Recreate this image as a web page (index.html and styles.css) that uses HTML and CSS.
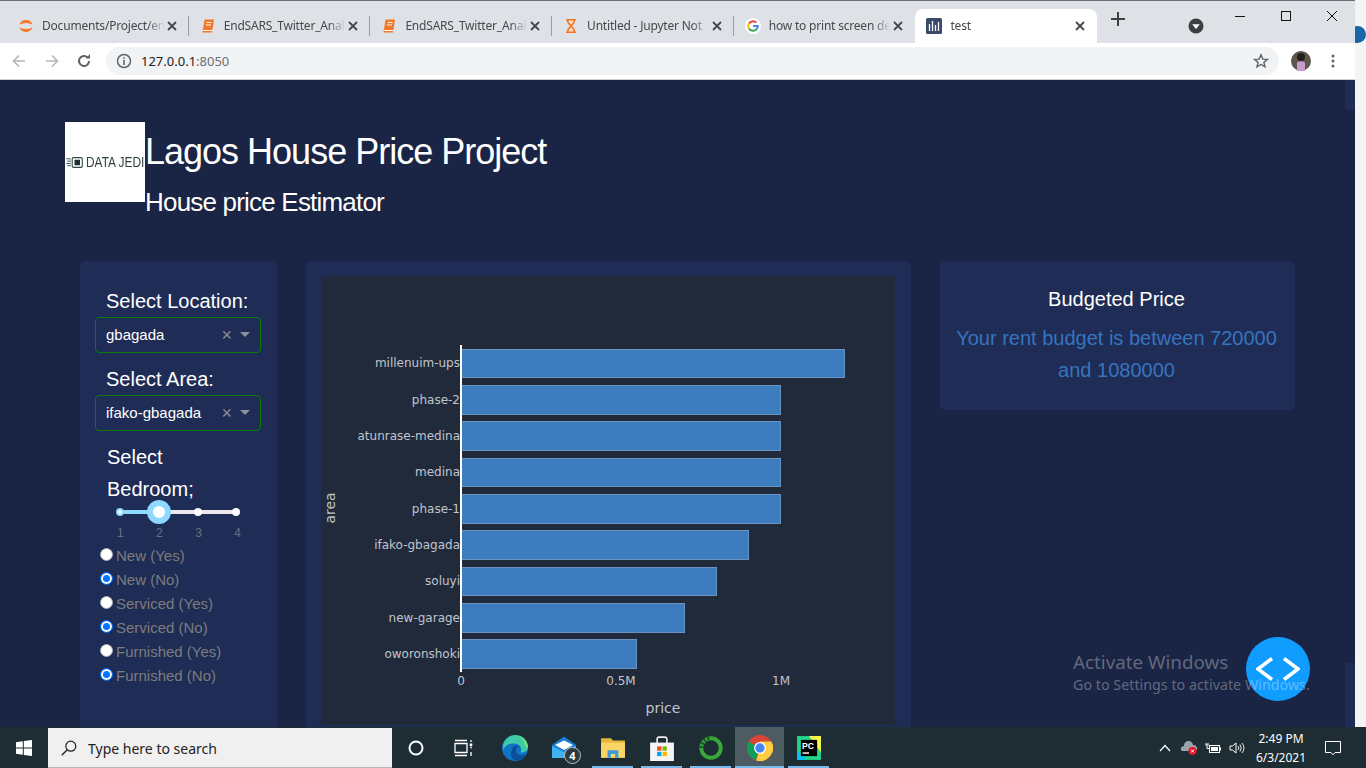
FILE: index.html
```html
<!DOCTYPE html>
<html lang="en">
<head>
<meta charset="utf-8">
<title>test</title>
<link rel="stylesheet" href="styles.css">
</head>
<body>
<div class="screen">
  <div class="upper">
    <div class="window">
      <div class="tabstrip">
        <div class="tab sep">
          <svg class="fav" viewBox="0 0 16 16"><path d="M1.500 6.500A7 7 0 0 1 14.500 6.500A10 5.500 0 0 0 1.500 6.500Z" fill="#f37726"/><path d="M1.500 9.500A7 7 0 0 0 14.500 9.500A10 5.500 0 0 1 1.500 9.500Z" fill="#f37726"/></svg>
          <span class="tab-title">Documents/Project/en</span>
          <svg class="tab-x" viewBox="0 0 10 10"><path d="M1 1L9 9M9 1L1 9"/></svg>
        </div>
        <div class="tab sep">
          <svg class="fav" viewBox="0 0 16 16"><path d="M4.500 1.500H14L12 14.500H2.500Z" fill="#f37726"/><path d="M6.500 4.500H11.500M6 7H11" stroke="#fff" stroke-width="1.200"/><path d="M3.200 12.500H12.500" stroke="#fff" stroke-width="1"/></svg>
          <span class="tab-title">EndSARS_Twitter_Anal</span>
          <svg class="tab-x" viewBox="0 0 10 10"><path d="M1 1L9 9M9 1L1 9"/></svg>
        </div>
        <div class="tab sep">
          <svg class="fav" viewBox="0 0 16 16"><path d="M4.500 1.500H14L12 14.500H2.500Z" fill="#f37726"/><path d="M6.500 4.500H11.500M6 7H11" stroke="#fff" stroke-width="1.200"/><path d="M3.200 12.500H12.500" stroke="#fff" stroke-width="1"/></svg>
          <span class="tab-title">EndSARS_Twitter_Anal</span>
          <svg class="tab-x" viewBox="0 0 10 10"><path d="M1 1L9 9M9 1L1 9"/></svg>
        </div>
        <div class="tab sep">
          <svg class="fav" viewBox="0 0 16 16"><path d="M3 1H13V2.500H12C12 6 9.500 7 9 8C9.500 9 12 10 12 13.500H13V15H3V13.500H4C4 10 6.500 9 7 8C6.500 7 4 6 4 2.500H3Z" fill="#f37726"/><path d="M5.500 2.500H10.500C10.500 4.500 9 5.500 8 6.500C7 5.500 5.500 4.500 5.500 2.500Z" fill="#fbe0cc"/><path d="M5.500 13.500C5.500 11.500 7 10.500 8 9.500C9 10.500 10.500 11.500 10.500 13.500Z" fill="#fbe0cc"/></svg>
          <span class="tab-title">Untitled - Jupyter Not</span>
          <svg class="tab-x" viewBox="0 0 10 10"><path d="M1 1L9 9M9 1L1 9"/></svg>
        </div>
        <div class="tab">
          <svg class="fav" viewBox="0 0 16 16"><circle cx="8" cy="8" r="8" fill="#fff"/><path d="M3.900 5.500A4.800 4.800 0 0 1 8 3.200A4.800 4.800 0 0 1 11.300 4.500" fill="none" stroke="#ea4335" stroke-width="2"/><path d="M3.900 5.500A4.800 4.800 0 0 0 3.900 10.500" fill="none" stroke="#fbbc05" stroke-width="2"/><path d="M3.900 10.500A4.800 4.800 0 0 0 11.500 11.300" fill="none" stroke="#34a853" stroke-width="2"/><path d="M8 8H12.800A4.800 4.800 0 0 1 11.500 11.300" fill="none" stroke="#4285f4" stroke-width="2"/></svg>
          <span class="tab-title">how to print screen de</span>
          <svg class="tab-x" viewBox="0 0 10 10"><path d="M1 1L9 9M9 1L1 9"/></svg>
        </div>
        <div class="tab active">
          <svg class="fav" viewBox="0 0 16 16"><rect width="16" height="16" rx="1.500" fill="#3b4a6b"/><path d="M3.500 6V13M6.500 3V13M9.500 7V13M12.500 4V13" stroke="#fff" stroke-width="1.300"/></svg>
          <span class="tab-title">test</span>
          <svg class="tab-x" viewBox="0 0 10 10"><path d="M1 1L9 9M9 1L1 9"/></svg>
        </div>
        <svg class="newtab" viewBox="0 0 14 14"><path d="M7 0V14M0 7H14"/></svg>
        <svg class="media" viewBox="0 0 16 16"><circle cx="8" cy="8" r="7.500" fill="#3c4043"/><path d="M4.200 6.200H11.800L8 11Z" fill="#fff"/></svg>
        <div class="winctl">
          <svg class="ctl" viewBox="0 0 46 30"><path d="M18 15.500H28" stroke="#111" fill="none"/></svg>
          <svg class="ctl" viewBox="0 0 46 30"><rect x="18.500" y="10.500" width="9" height="9" stroke="#111" fill="none"/></svg>
          <svg class="ctl" viewBox="0 0 46 30"><path d="M18 10L28 20M28 10L18 20" stroke="#111" fill="none"/></svg>
        </div>
      </div>
      <div class="toolbar">
        <svg class="navico" viewBox="0 0 16 16"><path d="M14 8H2.500M8 2.500L2.500 8L8 13.500" class="dim"/></svg>
        <svg class="navico fwd" viewBox="0 0 16 16"><path d="M2 8H13.500M8 2.500L13.500 8L8 13.500" class="dim"/></svg>
        <svg class="navico rel" viewBox="0 0 16 16"><path d="M13 8A5 5 0 1 1 11.500 4.400" class="dark"/><path d="M9.500 5.500H14V1Z" fill="#5f6368"/></svg>
        <div class="omnibox">
          <svg class="info" viewBox="0 0 16 16"><circle cx="8" cy="8" r="6.500" fill="none" stroke="#5f6368" stroke-width="1.500"/><path d="M8 7V12M8 4.200V5.800" stroke="#5f6368" stroke-width="1.600"/></svg>
          <span class="url">127.0.0.1<span class="port">:8050</span></span>
          <svg class="star" viewBox="0 0 16 16"><path d="M8 1.800L9.800 6.100L14.400 6.400L10.900 9.400L12 13.900L8 11.500L4 13.900L5.100 9.400L1.600 6.400L6.200 6.100Z" fill="none" stroke="#5f6368" stroke-width="1.400"/></svg>
        </div>
        <svg class="avatar" viewBox="0 0 20 20"><circle cx="10" cy="10" r="10" fill="#5c564c"/><circle cx="10" cy="6" r="4" fill="#221e1c"/><path d="M6 20V11.500Q10 9 14 11.500V20Z" fill="#c79bd0"/></svg>
        <svg class="kebab" viewBox="0 0 4 14"><circle cx="2" cy="2" r="1.500"/><circle cx="2" cy="7" r="1.500"/><circle cx="2" cy="12" r="1.500"/></svg>
      </div>
      <div class="viewport">
        <main class="page">
          <header class="header">
            <div class="logo">
              <svg class="logo-mark" viewBox="0 0 18 12"><path d="M0 2H5M1 4.500H5M0 7H5M1 9.500H5" stroke="#2f4a48" stroke-width="1"/><rect x="6.500" y="0.700" width="11" height="10.600" rx="1.500" fill="none" stroke="#2f4a48" stroke-width="1.200"/><rect x="9" y="3" width="6" height="6" fill="#22302f"/></svg>
              <span class="logo-text">DATA JEDI</span>
            </div>
            <div class="titles">
              <h1 class="title">Lagos House Price Project</h1>
              <h2 class="subtitle">House price Estimator</h2>
            </div>
          </header>
          <section class="row">
            <aside class="card side">
              <p class="side-label">Select Location:</p>
              <div class="dropdown"><span class="dd-value">gbagada</span><span class="dd-clear">×</span><span class="dd-caret"></span></div>
              <p class="side-label spaced">Select Area:</p>
              <div class="dropdown"><span class="dd-value">ifako-gbagada</span><span class="dd-clear">×</span><span class="dd-caret"></span></div>
              <p class="side-label spaced bedroom">Select Bedroom;</p>
              <div class="slider">
                <div class="rail"><div class="rail-fill"></div><i class="stop on s1"></i><i class="stop s3"></i><i class="stop s4"></i><i class="handle"></i></div>
                <div class="marks"><span>1</span><span>2</span><span>3</span><span>4</span></div>
              </div>
              <label class="opt"><input type="radio" name="n"><span>New (Yes)</span></label>
              <label class="opt"><input type="radio" name="n" checked><span>New (No)</span></label>
              <label class="opt"><input type="radio" name="s"><span>Serviced (Yes)</span></label>
              <label class="opt"><input type="radio" name="s" checked><span>Serviced (No)</span></label>
              <label class="opt"><input type="radio" name="f"><span>Furnished (Yes)</span></label>
              <label class="opt"><input type="radio" name="f" checked><span>Furnished (No)</span></label>
            </aside>
            <section class="card chart">
              <svg class="plot" viewBox="321 276 574 449">
                <rect x="321" y="276" width="574" height="449" fill="#212a3a"/>
                <g class="bars">
                  <rect x="461.500" y="349.500" width="383" height="28"/>
                  <rect x="461.500" y="385.500" width="319" height="29"/>
                  <rect x="461.500" y="421.500" width="319" height="29"/>
                  <rect x="461.500" y="458.500" width="319" height="28"/>
                  <rect x="461.500" y="494.500" width="319" height="29"/>
                  <rect x="461.500" y="530.500" width="287" height="29"/>
                  <rect x="461.500" y="567.500" width="255" height="28"/>
                  <rect x="461.500" y="603.500" width="223" height="29"/>
                  <rect x="461.500" y="639.500" width="175" height="29"/>
                </g>
                <path d="M461 345V672" stroke="#fff" stroke-width="2"/>
                <g class="ylab">
                  <text x="460" y="367">millenuim-ups</text>
                  <text x="460" y="404">phase-2</text>
                  <text x="460" y="440">atunrase-medina</text>
                  <text x="460" y="476">medina</text>
                  <text x="460" y="513">phase-1</text>
                  <text x="460" y="549">ifako-gbagada</text>
                  <text x="460" y="585">soluyi</text>
                  <text x="460" y="622">new-garage</text>
                  <text x="460" y="658">oworonshoki</text>
                </g>
                <g class="xlab">
                  <text x="461" y="685">0</text>
                  <text x="621" y="685">0.5M</text>
                  <text x="781" y="685">1M</text>
                </g>
                <text class="axt" x="663" y="713">price</text>
                <text class="axt" transform="translate(335 508) rotate(-90)">area</text>
              </svg>
            </section>
            <aside class="card budget">
              <h3 class="budget-title">Budgeted Price</h3>
              <p class="budget-text">Your rent budget is between 720000 and 1080000</p>
            </aside>
          </section>
        </main>
        <div class="vscroll"><div class="vs-end"></div><div class="vs-mid"></div><div class="vs-low"></div></div>
        <div class="activate"><div class="act-1">Activate Windows</div><div class="act-2">Go to Settings to activate Windows.</div></div>
        <div class="fab"><svg viewBox="0 0 44 24"><path d="M16 1.500L2 12L16 22.500M28 1.500L42 12L28 22.500"/></svg></div>
      </div>
    </div>
    <div class="desk"><i class="desk-dot"></i></div>
  </div>
  <footer class="taskbar">
    <div class="start"><svg viewBox="0 0 16 16"><path d="M0 2.300L6.800 1.300V7.500H0ZM7.800 1.100L16 0V7.500H7.800ZM0 8.500H6.800V14.700L0 13.700ZM7.800 8.500H16V16L7.800 14.900Z" fill="#fff"/></svg></div>
    <div class="search">
      <svg class="lens" viewBox="0 0 16 16"><circle cx="9.800" cy="6.200" r="5" fill="none" stroke="#222" stroke-width="1.200"/><path d="M6.200 9.800L0.800 15.200" stroke="#222" stroke-width="1.400"/></svg>
      <span class="search-text">Type here to search</span>
    </div>
    <div class="apps">
      <div class="app cortana"><svg class="ai" viewBox="0 0 24 24"><circle cx="12" cy="12" r="6.500" fill="none" stroke="#fff" stroke-width="2"/></svg></div>
      <div class="app tv"><svg class="ai" viewBox="0 0 24 24"><path d="M4 7.500H16V16.500H4ZM4 4.500H16M4 19.500H16M20 4V6M20 10.500V12.500M20 16V20" fill="none" stroke="#fff" stroke-width="1.300"/><rect x="18.700" y="7.500" width="2.600" height="2.500" fill="#fff"/></svg></div>
      <div class="app"><svg class="ai big" viewBox="0 0 24 24"><circle cx="12" cy="12" r="12" fill="#1173c4"/><path d="M1 9C3 3 8 0 12 0C19 0 24 5 24 11C24 15 20 16.500 17 16C19 13 17 8.500 12.500 8C7 7.500 3 9 1 14Z" fill="#3fc9a6"/><path d="M24 12C24 7 20 2 14 1C19 3 21 6 21 9C22 11 23 12 24 12Z" fill="#7be06e"/><path d="M9 14.500C9 10 14 8.800 17 11C15.500 10.500 12.500 11.500 13 15C13.500 18.500 18 19.800 22.500 17.500C20.500 21.500 15.500 24 11.500 23C8 21 7.500 18 9 14.500Z" fill="#0b4f9a"/></svg></div>
      <div class="app mail"><svg class="ai big" viewBox="0 0 26 24"><path d="M1 9L13 0.500L25 9V21H1Z" fill="#1a7ed6"/><path d="M4 9L13 4.500L22 9L13 14Z" fill="#fff"/><path d="M1 10L13 16L25 10V22H1Z" fill="#3fb3f0"/></svg><span class="mail-badge">4</span></div>
      <div class="app run"><svg class="ai big" viewBox="0 0 24 22"><path d="M1 2H10L12 4H23V20H1Z" fill="#e8b739"/><path d="M1 6H23V20H1Z" fill="#fbd468"/><path d="M7 20V13H17V20H14V16.500H10V20Z" fill="#3c9ad8"/></svg></div>
      <div class="app run"><svg class="ai big" viewBox="0 0 24 24"><path d="M7.500 8V4A2 2 0 0 1 9.500 2H14.500A2 2 0 0 1 16.500 4V8" fill="none" stroke="#eee" stroke-width="1.500"/><path d="M1 7H23V24H1Z" fill="#f5f5f5"/><rect x="7.500" y="10.500" width="4" height="4" fill="#f25022"/><rect x="12.500" y="10.500" width="4" height="4" fill="#7fba00"/><rect x="7.500" y="15.500" width="4" height="4" fill="#00a4ef"/><rect x="12.500" y="15.500" width="4" height="4" fill="#ffb900"/></svg></div>
      <div class="app run"><svg class="ai big" viewBox="0 0 24 24"><circle cx="12" cy="12" r="9" fill="none" stroke="#38a83c" stroke-width="3.600"/><path d="M3 12A9 9 0 0 1 12 3" fill="none" stroke="#1d5a2b" stroke-width="3.600" stroke-dasharray="2 1.500"/></svg></div>
      <div class="app run act"><svg class="ai big" viewBox="0 0 24 24"><circle cx="12" cy="12" r="12" fill="#db4437"/><path d="M12 12L1.600 6A12 12 0 0 0 8 23.300Z" fill="#0f9d58"/><path d="M12 6H22.400A12 12 0 0 1 8.500 23.500L12 12Z" fill="#ffcd40"/><circle cx="12" cy="12" r="5.500" fill="#fff"/><circle cx="12" cy="12" r="4.300" fill="#4285f4"/></svg></div>
      <div class="app run"><svg class="ai big" viewBox="0 0 24 24"><path d="M1 1H23V23H1Z" fill="#21d789"/><path d="M12 1H23V16Z" fill="#fcf84a"/><path d="M1 14V23H10Z" fill="#07c3f2"/><rect x="4.500" y="4.500" width="15" height="15" fill="#000"/><text class="pc" x="5.500" y="12.500">PC</text><rect x="6" y="16" width="6" height="1.300" fill="#fff"/></svg></div>
    </div>
    <div class="tray">
      <svg class="tr caret" viewBox="0 0 12 8"><path d="M1 7L6 1.500L11 7" fill="none" stroke="#fff" stroke-width="1.200"/></svg>
      <svg class="tr cloud" viewBox="0 0 18 14"><path d="M1 9A3 3 0 0 1 4 5A4.500 4.500 0 0 1 13 4A3.500 3.500 0 0 1 16 10H2Z" fill="#9aa3a8"/><circle cx="12.500" cy="10" r="4" fill="#e81123"/><path d="M11 8.500L14 11.500M14 8.500L11 11.500" stroke="#fff" stroke-width="1"/></svg>
      <svg class="tr batt" viewBox="0 0 16 12"><path d="M0.500 3H3.500M1 1V3M3 1V3M2 3.500V6.500H4" fill="none" stroke="#fff"/><rect x="4.500" y="3.500" width="10" height="7" fill="none" stroke="#fff"/><rect x="6" y="5" width="7" height="4" fill="#fff"/><path d="M15.500 5.500V8.500" stroke="#fff"/></svg>
      <svg class="tr vol" viewBox="0 0 16 14"><path d="M1 5H3.500L7 2V12L3.500 9H1Z" fill="none" stroke="#fff"/><path d="M9 5A3 3 0 0 1 9 9M11 3.500A6 6 0 0 1 11 10.500M13 2A8 8 0 0 1 13 12" fill="none" stroke="#fff" stroke-width="0.900"/></svg>
      <div class="clock"><div>2:49 PM</div><div>6/3/2021</div></div>
      <svg class="tr note" viewBox="0 0 16 16"><path d="M0.500 1.500H15.500V12.500H10L8 14.800L6 12.500H0.500Z" fill="none" stroke="#fff"/></svg>
    </div>
  </footer>
</div>
</body>
</html>
```
FILE: styles.css
```css
* { box-sizing: border-box; }
html, body { margin: 0; padding: 0; }
body { width: 1366px; height: 768px; overflow: hidden; font-family: "Liberation Sans", Arial, sans-serif; background: #fff; }
.screen { width: 1366px; height: 768px; display: flex; flex-direction: column; }
.upper { flex: 1; min-height: 0; display: flex; }
.window { width: 1355px; display: flex; flex-direction: column; }
.desk { flex: 1; background: #f4f4f4; position: relative; overflow: hidden; }
.desk-dot { position: absolute; left: -6px; top: 26px; width: 17px; height: 17px; border-radius: 50%; background: #1666a8; }

/* tabs */
.tabstrip { height: 43px; flex: none; background: #dee1e6; border-top: 1px solid #6b6e72; display: flex; align-items: flex-start; padding-left: 7px; }
.tab { width: 181.7px; height: 34px; margin-top: 8px; flex: none; display: flex; align-items: center; padding: 0 12px 1px 11px; position: relative; color: #45484c; font: 12px "Noto Sans", sans-serif; letter-spacing: -0.2px; }
.tab.sep::after { content: ""; position: absolute; right: 0; top: 7px; height: 20px; width: 1px; background: #9a9da1; }
.tab.active { background: #fff; border-radius: 8px 8px 0 0; }
.fav { width: 16px; height: 16px; flex: none; margin-right: 8px; }
.tab-title { flex: 1; min-width: 0; white-space: nowrap; overflow: hidden; -webkit-mask-image: linear-gradient(90deg, #000 84%, transparent 98%); mask-image: linear-gradient(90deg, #000 84%, transparent 98%); }
.tab-x { width: 10px; height: 10px; flex: none; }
.tab-x path { stroke: #45484c; stroke-width: 1.8; fill: none; }
.newtab { width: 14px; height: 14px; margin: 11px 0 0 14px; flex: none; }
.newtab path { stroke: #3c4043; stroke-width: 2; fill: none; }
.media { width: 16px; height: 16px; margin: 17px 0 0 63px; flex: none; }
.winctl { display: flex; margin: 0 0 0 13px; flex: none; }
.ctl { width: 46px; height: 30px; display: block; }

/* toolbar */
.toolbar { height: 37px; flex: none; background: #fff; border-bottom: 1px solid #d0d2d5; display: flex; align-items: center; padding: 0 0 1px 11px; }
.navico { width: 16px; height: 16px; flex: none; }
.navico.fwd { margin-left: 17px; }
.navico.rel { margin-left: 16px; }
.dim, .dark { fill: none; stroke-width: 1.700; }
.dim { stroke: #b4b7bb; }
.dark { stroke: #5f6368; stroke-width: 2; }
.omnibox { width: 1173px; height: 28px; margin-left: 14px; flex: none; background: #f1f3f4; border-radius: 14px; display: flex; align-items: center; padding: 0 10px 0 10px; }
.info { width: 16px; height: 16px; flex: none; }
.url { margin-left: 9px; flex: 1; font: 13px "Noto Sans", sans-serif; color: #202124; }
.port { color: #6b6f74; }
.star { width: 16px; height: 16px; flex: none; }
.avatar { width: 20px; height: 20px; margin-left: 12px; flex: none; }
.kebab { width: 4px; height: 14px; margin-left: 20px; flex: none; fill: #5f6368; }

/* page */
.viewport { flex: 1; min-height: 0; position: relative; display: flex; background: #1a2444; overflow: hidden; }
.page { flex: 1; min-width: 0; padding-top: 42px; display: flex; flex-direction: column; overflow: hidden; }
.vscroll { width: 10px; flex: none; display: flex; flex-direction: column; }
.vs-end { height: 30px; background: #1f2c56; }
.vs-mid { flex: 1; }
.vs-low { height: 64px; background: #1f2c56; }

.header { display: flex; padding-left: 65px; flex: none; }
.logo { width: 80px; height: 80px; background: #fff; flex: none; display: flex; align-items: center; padding-left: 1px; white-space: nowrap; overflow: hidden; }
.logo-mark { width: 17px; height: 11px; flex: none; margin-right: 3px; }
.logo-text { display: inline-block; width: 69px; margin-right: -10px; flex: none; font: 14px "Liberation Sans", sans-serif; color: #2f4240; transform: scaleX(0.85); transform-origin: left center; }
.titles { color: #fff; }
.title { margin: 9px 0 0; font-weight: 400; font-size: 36px; line-height: 42px; letter-spacing: -1px; }
.subtitle { margin: 15px 0 0; font-weight: 400; font-size: 26px; line-height: 28px; letter-spacing: -0.8px; }

.row { flex: 1; min-height: 0; margin-top: 45px; padding-left: 80px; display: flex; gap: 29px; align-items: stretch; }
.card { background: #1f2c56; border-radius: 5px; flex: none; }
.side { width: 197px; padding: 24px 16px 0 15px; border-radius: 5px 5px 0 0; }
.side-label { margin: 0 0 0 11px; font-size: 20px; line-height: 32px; color: #fff; }
.side-label.spaced { margin-top: 10px; }
.side-label.bedroom { margin-left: 12px; width: 100px; }
.dropdown { height: 36px; border: 1px solid #0a7a0a; border-radius: 4px; display: flex; align-items: center; padding: 0 10px 1px; color: #fff; font-size: 15px; }
.dd-value { flex: 1; }
.dd-clear { color: #8a8f9a; font-size: 18px; line-height: 1; margin-right: 8px; }
.dd-caret { width: 0; height: 0; border: 5px solid transparent; border-top-color: #8a8f9a; border-bottom: 0; }

.slider { height: 38px; padding: 3px 0 0 25px; }
.rail { height: 4px; margin-top: 2px; border-radius: 2px; background: #e9e9e9; position: relative; width: 116px; }
.rail-fill { position: absolute; left: 0; top: 0; height: 4px; width: 39px; background: #8fd8ff; border-radius: 2px; }
.stop { position: absolute; top: -2px; width: 8px; height: 8px; border-radius: 50%; background: #fff; }
.stop.on { background: #fff; border: 2px solid #8fd8ff; }
.s1 { left: -4px; }
.s3 { left: 74px; }
.s4 { left: 112px; }
.handle { position: absolute; left: 27px; top: -10px; width: 24px; height: 24px; border-radius: 50%; background: #fff; border: 6px solid #8fd8ff; }
.marks { display: flex; justify-content: space-between; margin: 12px 0 0 -3px; width: 124px; font-size: 12px; line-height: 14px; color: #6b7080; }

.opt { display: flex; align-items: center; height: 24px; font-size: 15px; color: #7c7c7c; padding-left: 14px; }
.opt input { appearance: none; -webkit-appearance: none; width: 13px; height: 13px; border-radius: 50%; margin: -2px 3px 0 -9px; background: #fff; border: 1px solid #aaa; flex: none; }
.opt input:checked { background: #0075ff; border-color: #0075ff; box-shadow: inset 0 0 0 2px #fff; }

.chart { width: 605px; padding: 15px 16px 2px 15px; border-radius: 5px 5px 0 0; }
.plot { display: block; width: 574px; height: 449px; }
.bars rect { fill: #3d7cbd; stroke: #6a92c2; stroke-width: 1; }
.ylab text, .xlab text, .axt { font-family: "DejaVu Sans", sans-serif; font-size: 12px; fill: #c0c5cc; }
.ylab text { text-anchor: end; }
.xlab text { text-anchor: middle; }
.axt { font-size: 14px; text-anchor: middle; }

.budget { width: 355px; height: 149px; padding: 22px 16px 0 14px; text-align: center; }
.budget-title { margin: 0; font-weight: 400; font-size: 20px; line-height: 32px; color: #fff; }
.budget-text { margin: 7px 0 0; font-size: 20px; line-height: 32px; color: #3674be; }

.activate { position: absolute; left: 1073px; top: 570px; color: rgba(255,255,255,0.32); font-family: "Noto Sans", sans-serif; z-index: 3; white-space: nowrap; }
.act-1 { font-size: 18.8px; line-height: 24px; }
.act-2 { font-size: 14.3px; line-height: 20px; margin-top: 1px; }
.fab { position: absolute; left: 1246px; top: 557px; width: 64px; height: 64px; border-radius: 50%; background: #119dff; display: flex; align-items: center; justify-content: center; z-index: 2; }
.fab svg { width: 44px; height: 24px; }
.fab path { fill: none; stroke: #fff; stroke-width: 3.500; }

/* taskbar */
.taskbar { height: 41px; flex: none; background: #1e2d33; display: flex; align-items: stretch; color: #fff; }
.start { width: 48px; flex: none; display: flex; align-items: center; justify-content: center; }
.start svg { width: 16px; height: 16px; }
.search { width: 344px; flex: none; margin-top: 1px; background: #f0f0f0; border-bottom: 1px solid #b5b5b5; display: flex; align-items: center; color: #222; font: 14px "Noto Sans", sans-serif; padding-left: 13px; }
.lens { width: 16px; height: 16px; margin-right: 11px; flex: none; }
.search-text { margin-top: 2px; }
.apps { display: flex; flex: none; }
.app { width: 49px; flex: none; display: flex; align-items: center; justify-content: center; position: relative; }
.app.cortana { padding-right: 2px; }
.app.tv { padding-right: 5px; }
.ai { width: 24px; height: 24px; display: block; }
.ai.big { width: 26px; height: 26px; }
.app.run::after { content: ""; position: absolute; left: 4px; right: 4px; bottom: 0; height: 2px; background: #76b9ed; }
.app.act { background: #4d5c63; }
.app.act::after { left: 0; right: 0; }
.mail-badge { position: absolute; left: 25px; top: 20px; width: 17px; height: 17px; border-radius: 50%; background: #2c3a40; border: 1px solid #bbb; font: 700 11px/15px "Noto Sans", sans-serif; text-align: center; color: #fff; }
.pc { font: 700 8px "Liberation Sans", sans-serif; fill: #fff; }
.tray { margin-left: auto; display: flex; align-items: center; width: 211px; flex: none; padding-left: 4px; }
.tr { flex: none; display: block; }
.caret { width: 12px; height: 8px; }
.cloud { width: 18px; height: 14px; margin-left: 9px; }
.batt { width: 16px; height: 12px; margin-left: 7px; }
.vol { width: 16px; height: 14px; margin-left: 8px; }
.clock { width: 68px; margin-left: 2px; text-align: center; font: 12px/19px "Noto Sans", sans-serif; }
.note { width: 16px; height: 16px; margin-left: 10px; }
```
